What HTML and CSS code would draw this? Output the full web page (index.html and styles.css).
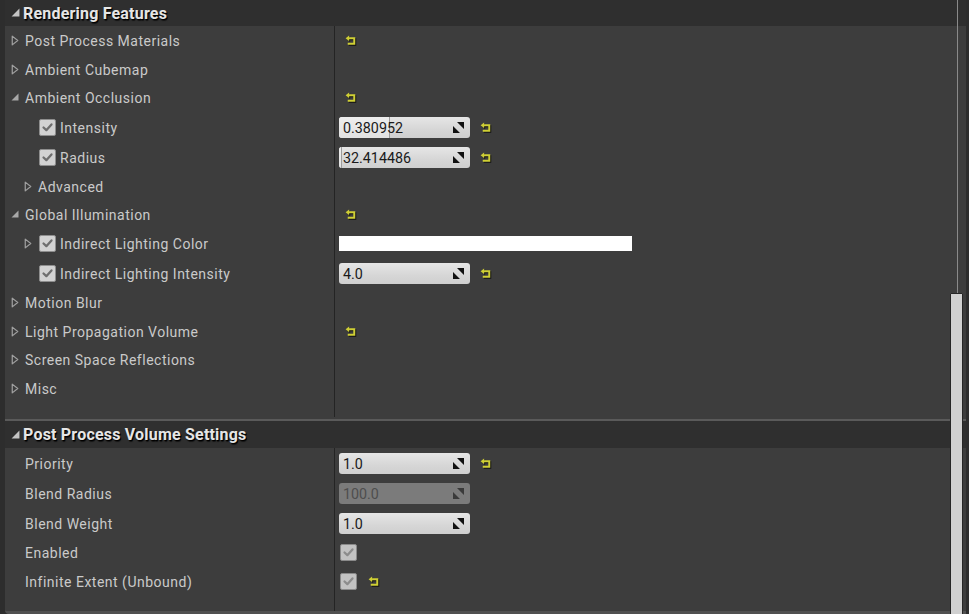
FILE: index.html
```html
<!DOCTYPE html>
<html>
<head>
<meta charset="utf-8">
<link rel="stylesheet" href="styles.css">
</head>
<body>
<div class="panel">
  <div class="header"><span class="exp"><svg class="tri-open hdr" viewBox="0 0 8 8"><path d="M7.5 0.5 V7.5 H0.5 Z"/></svg></span><span class="htitle">Rendering Features</span></div>

  <div class="row h29"><div class="name"><span class="exp"><svg class="tri" viewBox="0 0 7 10"><path d="M1 1 L6 5 L1 9 Z"/></svg></span><span class="lbl">Post Process Materials</span></div><div class="val"><svg class="reset" viewBox="0 0 11 10"><path class="rs" d="M3.5 3 H8.5 V8 H2.5"/><path class="ra" d="M0.6 3 L3.8 0.4 V5.6 Z"/></svg></div></div>
  <div class="row h28"><div class="name"><span class="exp"><svg class="tri" viewBox="0 0 7 10"><path d="M1 1 L6 5 L1 9 Z"/></svg></span><span class="lbl">Ambient Cubemap</span></div><div class="val"></div></div>
  <div class="row h29"><div class="name"><span class="exp"><svg class="tri-open" viewBox="0 0 8 8"><path d="M7.5 0.5 V7.5 H0.5 Z"/></svg></span><span class="lbl">Ambient Occlusion</span></div><div class="val"><svg class="reset" viewBox="0 0 11 10"><path class="rs" d="M3.5 3 H8.5 V8 H2.5"/><path class="ra" d="M0.6 3 L3.8 0.4 V5.6 Z"/></svg></div></div>
  <div class="row h30"><div class="name l1"><span class="exp"></span><span class="cb"><svg viewBox="0 0 17 17"><path d="M4 8.5 L7.2 11.5 L13 5"/></svg></span><span class="lbl">Intensity</span></div><div class="val"><div class="spin"><div class="fill" style="width:50px"></div><span class="num">0.380952</span><svg class="drag" viewBox="0 0 11 11"><path d="M4 0 H11 V7 Z M0 4 V11 H7 Z"/></svg></div><svg class="reset after" viewBox="0 0 11 10"><path class="rs" d="M3.5 3 H8.5 V8 H2.5"/><path class="ra" d="M0.6 3 L3.8 0.4 V5.6 Z"/></svg></div></div>
  <div class="row h30"><div class="name l1"><span class="exp"></span><span class="cb"><svg viewBox="0 0 17 17"><path d="M4 8.5 L7.2 11.5 L13 5"/></svg></span><span class="lbl">Radius</span></div><div class="val"><div class="spin"><div class="fill" style="width:2px"></div><span class="num">32.414486</span><svg class="drag" viewBox="0 0 11 11"><path d="M4 0 H11 V7 Z M0 4 V11 H7 Z"/></svg></div><svg class="reset after" viewBox="0 0 11 10"><path class="rs" d="M3.5 3 H8.5 V8 H2.5"/><path class="ra" d="M0.6 3 L3.8 0.4 V5.6 Z"/></svg></div></div>
  <div class="row h28"><div class="name l1"><span class="exp"><svg class="tri" viewBox="0 0 7 10"><path d="M1 1 L6 5 L1 9 Z"/></svg></span><span class="lbl">Advanced</span></div><div class="val"></div></div>
  <div class="row h29"><div class="name"><span class="exp"><svg class="tri-open" viewBox="0 0 8 8"><path d="M7.5 0.5 V7.5 H0.5 Z"/></svg></span><span class="lbl">Global Illumination</span></div><div class="val"><svg class="reset" viewBox="0 0 11 10"><path class="rs" d="M3.5 3 H8.5 V8 H2.5"/><path class="ra" d="M0.6 3 L3.8 0.4 V5.6 Z"/></svg></div></div>
  <div class="row h29"><div class="name l1"><span class="exp"><svg class="tri" viewBox="0 0 7 10"><path d="M1 1 L6 5 L1 9 Z"/></svg></span><span class="cb"><svg viewBox="0 0 17 17"><path d="M4 8.5 L7.2 11.5 L13 5"/></svg></span><span class="lbl">Indirect Lighting Color</span></div><div class="val"><div class="color"></div></div></div>
  <div class="row h30"><div class="name l1"><span class="exp"></span><span class="cb"><svg viewBox="0 0 17 17"><path d="M4 8.5 L7.2 11.5 L13 5"/></svg></span><span class="lbl">Indirect Lighting Intensity</span></div><div class="val"><div class="spin"><span class="num">4.0</span><svg class="drag" viewBox="0 0 11 11"><path d="M4 0 H11 V7 Z M0 4 V11 H7 Z"/></svg></div><svg class="reset after" viewBox="0 0 11 10"><path class="rs" d="M3.5 3 H8.5 V8 H2.5"/><path class="ra" d="M0.6 3 L3.8 0.4 V5.6 Z"/></svg></div></div>
  <div class="row h29"><div class="name"><span class="exp"><svg class="tri" viewBox="0 0 7 10"><path d="M1 1 L6 5 L1 9 Z"/></svg></span><span class="lbl">Motion Blur</span></div><div class="val"></div></div>
  <div class="row h28"><div class="name"><span class="exp"><svg class="tri" viewBox="0 0 7 10"><path d="M1 1 L6 5 L1 9 Z"/></svg></span><span class="lbl">Light Propagation Volume</span></div><div class="val"><svg class="reset" viewBox="0 0 11 10"><path class="rs" d="M3.5 3 H8.5 V8 H2.5"/><path class="ra" d="M0.6 3 L3.8 0.4 V5.6 Z"/></svg></div></div>
  <div class="row h29"><div class="name"><span class="exp"><svg class="tri" viewBox="0 0 7 10"><path d="M1 1 L6 5 L1 9 Z"/></svg></span><span class="lbl">Screen Space Reflections</span></div><div class="val"></div></div>
  <div class="row h28"><div class="name"><span class="exp"><svg class="tri" viewBox="0 0 7 10"><path d="M1 1 L6 5 L1 9 Z"/></svg></span><span class="lbl">Misc</span></div><div class="val"></div></div>
  <div class="row spacer1"><div class="name"></div><div class="val"></div></div>
  <div class="gap1"></div>

  <div class="sep"></div>
  <div class="header h2"><span class="exp"><svg class="tri-open hdr" viewBox="0 0 8 8"><path d="M7.5 0.5 V7.5 H0.5 Z"/></svg></span><span class="htitle">Post Process Volume Settings</span></div>

  <div class="row h30"><div class="name"><span class="exp"></span><span class="lbl">Priority</span></div><div class="val"><div class="spin"><span class="num">1.0</span><svg class="drag" viewBox="0 0 11 11"><path d="M4 0 H11 V7 Z M0 4 V11 H7 Z"/></svg></div><svg class="reset after" viewBox="0 0 11 10"><path class="rs" d="M3.5 3 H8.5 V8 H2.5"/><path class="ra" d="M0.6 3 L3.8 0.4 V5.6 Z"/></svg></div></div>
  <div class="row h30"><div class="name"><span class="exp"></span><span class="lbl">Blend Radius</span></div><div class="val"><div class="spin disabled"><span class="num">100.0</span><svg class="drag" viewBox="0 0 11 11"><path d="M4 0 H11 V7 Z M0 4 V11 H7 Z"/></svg></div></div></div>
  <div class="row h30"><div class="name"><span class="exp"></span><span class="lbl">Blend Weight</span></div><div class="val"><div class="spin"><span class="num">1.0</span><svg class="drag" viewBox="0 0 11 11"><path d="M4 0 H11 V7 Z M0 4 V11 H7 Z"/></svg></div></div></div>
  <div class="row h29"><div class="name"><span class="exp"></span><span class="lbl">Enabled</span></div><div class="val"><span class="cb dim"><svg viewBox="0 0 17 17"><path d="M4 8.5 L7.2 11.5 L13 5"/></svg></span></div></div>
  <div class="row h29"><div class="name"><span class="exp"></span><span class="lbl">Infinite Extent (Unbound)</span></div><div class="val"><span class="cb dim"><svg viewBox="0 0 17 17"><path d="M4 8.5 L7.2 11.5 L13 5"/></svg></span><svg class="reset after-cb" viewBox="0 0 11 10"><path class="rs" d="M3.5 3 H8.5 V8 H2.5"/><path class="ra" d="M0.6 3 L3.8 0.4 V5.6 Z"/></svg></div></div>
  <div class="row spacer2"><div class="name"></div><div class="val"></div></div>
</div>
<div class="scroll-track"></div>
<div class="scroll-thumb"></div>
</body>
</html>
```

FILE: styles.css
```css
html, body {
  margin: 0;
  padding: 0;
}
body {
  background: #2d2d2d;
  width: 969px;
  height: 614px;
  overflow: hidden;
  position: relative;
  font-family: Roboto, "Liberation Sans", sans-serif;
}
.panel {
  margin-left: 5px;
  width: 961px;
  background: #3d3d3d;
  border-bottom: 3px solid #505050;
  border-bottom-left-radius: 4px;
}
.header {
  height: 26px;
  background: #2f2f2f;
  display: flex;
  align-items: center;
  padding-left: 6px;
}
.header.h2 {
  height: 27px;
}
.htitle {
  font-weight: bold;
  font-size: 16px;
  letter-spacing: 0.2px;
  color: #e6e6e6;
  text-shadow: 1px 1px 0 #000, 1px 2px 1px rgba(0,0,0,0.6);
  margin-left: -2px;
}
.row {
  display: flex;
}
.h28 { height: 28px; }
.h29 { height: 29px; }
.h30 { height: 30px; }
.spacer1 { height: 15px; }
.gap1 { height: 2px; }
.spacer2 { height: 15px; }
.sep {
  height: 2px;
  background: #5a5a5a;
}
.name {
  width: 329px;
  display: flex;
  align-items: center;
  padding-left: 6px;
  box-sizing: border-box;
}
.name.l1 {
  padding-left: 19px;
}
.exp {
  width: 14px;
  flex: none;
  display: flex;
  align-items: center;
}
.tri {
  width: 8px;
  height: 11px;
}
.tri path {
  fill: none;
  stroke: #a0a0a0;
  stroke-width: 1.1;
  stroke-linejoin: round;
}
.tri-open {
  width: 8px;
  height: 8px;
  margin-top: -1px;
}
.tri-open path {
  fill: #a8a8a8;
}
.tri-open.hdr {
  width: 9px;
  height: 9px;
}
.tri-open.hdr path {
  fill: #c4c4c4;
}
.lbl {
  font-size: 14px;
  color: #cacaca;
  letter-spacing: 0.5px;
  white-space: nowrap;
  padding-top: 1px;
}
.cb {
  width: 17px;
  height: 17px;
  flex: none;
  box-sizing: border-box;
  background: #d2d2d2;
  border: 1px solid #8e8e8e;
  border-radius: 2px;
  margin-left: 1px;
  margin-right: 4px;
  display: flex;
}
.cb svg {
  width: 15px;
  height: 15px;
}
.cb path {
  fill: none;
  stroke: #6e6e6e;
  stroke-width: 2.6;
  stroke-linecap: round;
  stroke-linejoin: round;
}
.cb.dim {
  background: #c2c2c2;
  border-color: #8a8a8a;
  margin-left: 1px;
  margin-right: 0;
}
.cb.dim path {
  stroke: #8c8c8c;
}
.val {
  flex: 1;
  border-left: 1px solid #242424;
  display: flex;
  align-items: center;
  padding-left: 4px;
}
.spin {
  position: relative;
  width: 131px;
  height: 21px;
  box-sizing: border-box;
  border-radius: 3px;
  background: linear-gradient(#e6e6e6, #d6d6d6 60%, #cfcfcf);
  display: flex;
  align-items: center;
  justify-content: space-between;
  padding: 1px 6px 0 4px;
  overflow: hidden;
}
.spin .fill {
  position: absolute;
  left: 0;
  top: 0;
  bottom: 0;
  background: linear-gradient(#ededed, #e2e2e2);
  border-right: 1px solid #9c9c9c;
}
.num {
  position: relative;
  font-size: 14.3px;
  color: #1a1a1a;
}
.drag {
  position: relative;
  width: 11px;
  height: 11px;
}
.drag path {
  fill: #111;
}
.spin.disabled {
  background: #7b7b7b;
}
.spin.disabled .num {
  color: #4e4e4e;
}
.spin.disabled .drag path {
  fill: #3a3a3a;
}
.color {
  width: 293px;
  height: 15px;
  background: #ffffff;
}
.reset {
  width: 12px;
  height: 11px;
  margin-left: 6px;
  filter: drop-shadow(1px 1px 0 rgba(0,0,0,0.7));
}
.reset.after {
  margin-left: 10px;
}
.reset.after-cb {
  margin-left: 11px;
}
.rs {
  fill: none;
  stroke: #cfcf35;
  stroke-width: 1.8;
}
.ra {
  fill: #cfcf35;
}
.scroll-track {
  position: absolute;
  left: 957px;
  top: 0;
  width: 1px;
  height: 293px;
  background: #8a8a8a;
}
.scroll-thumb {
  position: absolute;
  left: 950px;
  top: 293px;
  width: 13px;
  height: 330px;
  box-sizing: border-box;
  background: #d0d0d0;
  border: 1px solid #262626;
  border-radius: 1px;
}
```
